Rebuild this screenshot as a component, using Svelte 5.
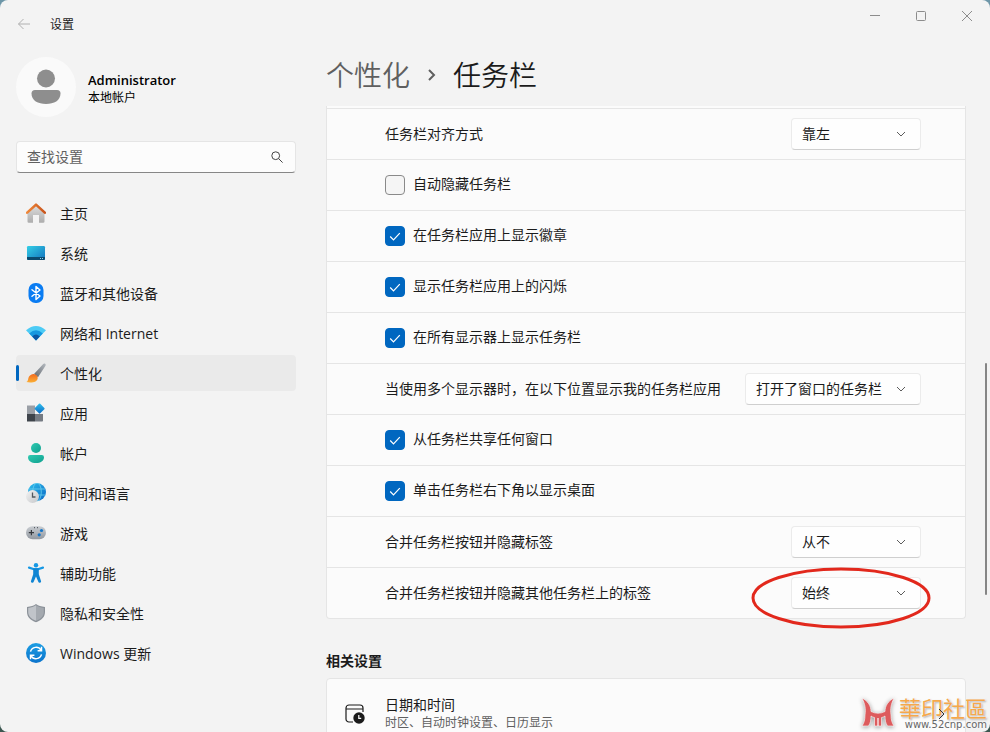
<script>
  const navItems = [
    { id: "home", label: "主页" },
    { id: "system", label: "系统" },
    { id: "bluetooth", label: "蓝牙和其他设备" },
    { id: "network", label: "网络和 Internet" },
    { id: "personalize", label: "个性化" },
    { id: "apps", label: "应用" },
    { id: "accounts", label: "帐户" },
    { id: "time", label: "时间和语言" },
    { id: "gaming", label: "游戏" },
    { id: "access", label: "辅助功能" },
    { id: "privacy", label: "隐私和安全性" },
    { id: "update", label: "Windows 更新" },
  ];

  let active = $state("personalize");
  let query = $state("");

  let rows = $state([
    { type: "select", label: "任务栏对齐方式", value: "靠左", options: ["靠左", "居中"] },
    { type: "check", label: "自动隐藏任务栏", checked: false },
    { type: "check", label: "在任务栏应用上显示徽章", checked: true },
    { type: "check", label: "显示任务栏应用上的闪烁", checked: true },
    { type: "check", label: "在所有显示器上显示任务栏", checked: true },
    {
      type: "select",
      label: "当使用多个显示器时，在以下位置显示我的任务栏应用",
      value: "打开了窗口的任务栏",
      options: ["打开了窗口的任务栏", "所有任务栏"],
      wide: true,
    },
    { type: "check", label: "从任务栏共享任何窗口", checked: true },
    { type: "check", label: "单击任务栏右下角以显示桌面", checked: true },
    { type: "select", label: "合并任务栏按钮并隐藏标签", value: "从不", options: ["从不", "始终"] },
    {
      type: "select",
      label: "合并任务栏按钮并隐藏其他任务栏上的标签",
      value: "始终",
      options: ["始终", "从不"],
      circled: true,
    },
  ]);
</script>

{#snippet navIcon(id)}
  <svg class="nav-icon" viewBox="0 0 20 20" aria-hidden="true">
    {#if id === "home"}
      <path d="M1.500 9.500 10 2l8.500 7.500V18.500a1.300 1.300 0 0 1-1.300 1.300H13V12H7v7.800H2.800a1.300 1.300 0 0 1-1.300-1.300z" fill="url(#g-grey)" />
      <path d="M1.200 9.600 10 1.600l8.800 8" fill="none" stroke="url(#g-roof)" stroke-width="2.600" stroke-linecap="round" stroke-linejoin="round" />
    {:else if id === "system"}
      <rect x="1" y="3" width="18" height="14" rx="1.200" fill="url(#g-screen)" />
      <path d="M1 14h18v1.800a1.200 1.200 0 0 1-1.200 1.200H2.200A1.200 1.200 0 0 1 1 15.800z" fill="#0b4a6f" />
      <path d="M14 15.500h1M16 15.500h1" stroke="#8fd3ee" />
    {:else if id === "bluetooth"}
      <rect x="2.500" y="0" width="15" height="20" rx="7" fill="#0a7cf2" />
      <path d="M6 6.800l8 6.200-4 3.500v-13l4 3.500-8 6.200" fill="none" stroke="#fff" stroke-width="1.400" stroke-linejoin="round" stroke-linecap="round" />
    {:else if id === "network"}
      <path d="M0 7.300Q10-1.400 20 7.300L10 17.600z" fill="#4ccbf5" />
      <path d="M3.200 10.500Q10 4.200 16.800 10.500L10 17.600z" fill="#1597e0" />
      <path d="M6.200 13.600Q10 9.600 13.800 13.600L10 17.600z" fill="#0b56a4" />
    {:else if id === "personalize"}
      <path d="M18.800.5c1 .4 1.200 1.400.7 2.300L12 14.200 8 11 17 1.200c.6-.6 1.100-.9 1.800-.7z" fill="url(#g-brush)" />
      <path d="M7.700 11c2.200.2 4 2 4 3.900 0 3.900-5.700 5.500-11.400 4.200 1.600-.9 1.700-2 2-3.600.4-2.400 2.800-4.800 5.400-4.500z" fill="url(#g-fire)" />
    {:else if id === "apps"}
      <path d="M1 2.500h8V11H1z" fill="#9a9fa6" />
      <path d="M1 11h8v7.500H1z" fill="#3e444b" />
      <path d="M9 11h8v6.700a.8.800 0 0 1-.8.800H9z" fill="#757b83" />
      <rect x="9.800" y="1.800" width="7.600" height="7.600" rx=".9" transform="rotate(45 13.600 5.600)" fill="url(#g-blue)" />
    {:else if id === "accounts"}
      <circle cx="10" cy="5" r="5" fill="url(#g-teal)" />
      <path d="M4.200 12h11.600A2.200 2.200 0 0 1 18 14.200C18 18 14.500 20 10 20s-8-2-8-5.800A2.200 2.200 0 0 1 4.200 12z" fill="url(#g-teal)" />
    {:else if id === "time"}
      <circle cx="11" cy="9" r="9" fill="url(#g-blue)" />
      <path d="M3 6h16M2.500 12h17" stroke="#6bd0ee" stroke-width=".8" />
      <ellipse cx="11" cy="9" rx="4.300" ry="9" fill="none" stroke="#6bd0ee" stroke-width=".8" />
      <circle cx="6.500" cy="13.500" r="6.500" fill="url(#g-clock)" />
      <path d="M6.500 9.500v4.500h3" fill="none" stroke="#53585e" stroke-width="1.300" />
    {:else if id === "gaming"}
      <rect x="0" y="3.200" width="20" height="13" rx="6.500" fill="url(#g-pad)" />
      <path d="M2.800 9.700h5.200M5.400 7.100v5.200" stroke="#35393e" stroke-width="1.200" />
      <path d="M8 4.700h1M11 4.700h1" stroke="#42474d" />
      <circle cx="15.500" cy="7.500" r="1.600" fill="#1676c8" />
      <circle cx="13.200" cy="11.800" r="1.600" fill="#1676c8" />
    {:else if id === "access"}
      <circle cx="10" cy="2.200" r="2.200" fill="#1698e4" />
      <path d="M3 4.600 8 6.200h4l5-1.600" fill="none" stroke="#1698e4" stroke-width="2.200" stroke-linecap="round" />
      <path d="M7.200 5.600h5.600v5.600l2.200 6.800a1.400 1.400 0 0 1-2.700.8L10 13.500l-2.300 5.300A1.400 1.400 0 0 1 5 18l2.200-6.800z" fill="#1085d3" />
    {:else if id === "privacy"}
      <path d="M10 1c2.500 1.700 5 2.600 9 2.900V9c0 5-3.600 8.300-9 10.200C4.600 17.300 1 14 1 9V3.900C5 3.600 7.500 2.700 10 1z" fill="#8c9299" />
      <path d="M10 2.300v15.500C5.200 16 2.200 13 2.200 9V5c3.500-.4 5.500-1.200 7.800-2.700z" fill="#c0c4c9" />
      <path d="M10 2.300c2.300 1.500 4.300 2.300 7.800 2.700v4c0 4-3 7-7.800 8.800z" fill="#a4a9af" />
    {:else}
      <circle cx="10" cy="10" r="10" fill="url(#g-update)" />
      <path d="M4.500 8.600A5.800 5.800 0 0 1 15 7M15.500 11.400A5.800 5.800 0 0 1 5 13" fill="none" stroke="#fff" stroke-width="1.500" />
      <path d="M15.500 3.800v3.900h-3.900M4.500 16.200v-3.900h3.900" fill="none" stroke="#fff" stroke-width="1.500" />
    {/if}
  </svg>
{/snippet}

<svg class="defs" aria-hidden="true">
  <defs>
    <linearGradient id="g-grey" x2="0" y2="1"><stop stop-color="#dedede" /><stop offset="1" stop-color="#acacac" /></linearGradient>
    <linearGradient id="g-roof"><stop stop-color="#f0883a" /><stop offset="1" stop-color="#c9551c" /></linearGradient>
    <linearGradient id="g-screen" x2="1" y2="1"><stop stop-color="#34cfe6" /><stop offset="1" stop-color="#1272be" /></linearGradient>
    <linearGradient id="g-brush" x1="1" x2="0" y2="1"><stop stop-color="#b5bac0" /><stop offset="1" stop-color="#62686f" /></linearGradient>
    <linearGradient id="g-fire" x2="0" y2="1"><stop stop-color="#f26a1e" /><stop offset="1" stop-color="#fbb035" /></linearGradient>
    <linearGradient id="g-blue" x2="1" y2="1"><stop stop-color="#2ec0ee" /><stop offset="1" stop-color="#0b68c4" /></linearGradient>
    <linearGradient id="g-teal" x2="1" y2="1"><stop stop-color="#2fcab1" /><stop offset="1" stop-color="#0fa08f" /></linearGradient>
    <linearGradient id="g-clock" x2="1" y2="1"><stop stop-color="#f3f3f3" /><stop offset="1" stop-color="#c5c7ca" /></linearGradient>
    <linearGradient id="g-pad" x2="0" y2="1"><stop stop-color="#c9cdd2" /><stop offset="1" stop-color="#9298a0" /></linearGradient>
    <linearGradient id="g-update" x2="0" y2="1"><stop stop-color="#1b9de3" /><stop offset="1" stop-color="#0c74cc" /></linearGradient>
  </defs>
</svg>

<div class="window">
  <header class="titlebar">
    <button class="back" aria-label="返回">
      <svg width="14" height="14" viewBox="0 0 14 14"><path d="M13 7H1.500M6.500 2 1.500 7l5 5" /></svg>
    </button>
    <span class="title">设置</span>
    <div class="caption-buttons">
      <button aria-label="最小化"><svg width="12" height="12" viewBox="0 0 12 12"><path d="M1 5.500h10" /></svg></button>
      <button aria-label="最大化"><svg width="12" height="12" viewBox="0 0 12 12"><rect x="1.500" y="1.500" width="9" height="9" rx="1" /></svg></button>
      <button aria-label="关闭"><svg width="12" height="12" viewBox="0 0 12 12"><path d="M1 1l10 10M11 1 1 11" /></svg></button>
    </div>
  </header>

  <div class="body">
    <aside class="sidebar">
      <div class="account">
        <svg class="avatar" viewBox="0 0 60 60" aria-hidden="true">
          <circle cx="30" cy="30" r="30" fill="#fafafa" />
          <circle cx="30" cy="21.500" r="9" fill="#8e8e8e" />
          <path d="M19 33h22a3.500 3.500 0 0 1 3.500 3.500C44.500 43.500 38 47 30 47s-14.500-3.500-14.500-10.500A3.500 3.500 0 0 1 19 33z" fill="#8e8e8e" />
        </svg>
        <div class="account-text">
          <strong>Administrator</strong>
          <span>本地帐户</span>
        </div>
      </div>

      <div class="search">
        <input type="text" placeholder="查找设置" aria-label="查找设置" bind:value={query} />
        <svg width="12" height="12" viewBox="0 0 12 12" aria-hidden="true"><circle cx="4.700" cy="4.700" r="3.900" /><path d="M7.600 7.600l4 4" /></svg>
      </div>

      <nav>
        {#each navItems as item}
          <button class="nav-item" class:active={active === item.id} onclick={() => (active = item.id)}>
            {@render navIcon(item.id)}
            <span>{item.label}</span>
          </button>
        {/each}
      </nav>
    </aside>

    <main>
      <h1>
        <a href="#personalize">个性化</a>
        <svg width="9" height="12" viewBox="0 0 9 12" aria-hidden="true"><path d="M2 1l5 5-5 5" /></svg>
        <span>任务栏</span>
      </h1>

      <div class="scroll-area">
        <div class="card options">
          {#each rows as row, i}
            <div class="row">
              {#if row.type === "check"}
                <label class="check">
                  <input type="checkbox" bind:checked={row.checked} />
                  {#if row.checked}
                    <svg width="20" height="20" viewBox="0 0 20 20" aria-hidden="true"><path d="M5.200 10.500l3.300 3.300 6.300-6.600" /></svg>
                  {/if}
                  <span>{row.label}</span>
                </label>
              {:else}
                <label for="option-{i}">{row.label}</label>
                <div class="select" class:wide={row.wide}>
                  <select id="option-{i}" bind:value={row.value}>
                    {#each row.options as option}
                      <option>{option}</option>
                    {/each}
                  </select>
                  <svg class="chevron" width="10" height="6" viewBox="0 0 10 6" aria-hidden="true"><path d="M1 1l4 4 4-4" /></svg>
                  {#if row.circled}
                    <svg class="circle" width="180" height="62" viewBox="0 0 180 62" aria-hidden="true"><ellipse cx="90" cy="31" rx="88" ry="29" /></svg>
                  {/if}
                </div>
              {/if}
            </div>
          {/each}
        </div>

        <h2>相关设置</h2>
        <a class="card related" href="#datetime">
          <svg class="date-icon" width="20" height="20" viewBox="0 0 20 20" aria-hidden="true">
            <path d="M8 18H4a3 3 0 0 1-3-3V4a3 3 0 0 1 3-3h11a3 3 0 0 1 3 3v4M1 5h17" fill="none" stroke="#1b1b1b" stroke-width="1.200" />
            <circle cx="14" cy="14" r="5.700" fill="#1b1b1b" />
            <path d="M13.800 11v3.300h2.400" fill="none" stroke="#fff" stroke-width="1.200" />
          </svg>
          <div class="related-text">
            <span>日期和时间</span>
            <small>时区、自动时钟设置、日历显示</small>
          </div>
          <svg class="go" width="8" height="12" viewBox="0 0 8 12" aria-hidden="true"><path d="M2 1l5 5-5 5" /></svg>
        </a>
      </div>
      <div class="scroll-thumb"></div>
    </main>
  </div>

  <div class="watermark">
    <svg width="36" height="34" viewBox="0 0 36 34" aria-hidden="true">
      <path d="M2 2C8 5 11 10 11 15.500Q18 19 25 15.500C25 10 28 5 34 2C31 8 30 13 31 19C31 24 32 27 34 30H27.500C25.500 27 25 24 25 20Q23 21.500 21.500 21.500V30H14.500V21.500Q13 21.500 11 20C11 24 10.500 27 8.500 30H2C4 27 5 24 5 19C6 13 5 8 2 2z" />
      <path class="slit" d="M18 22v8" />
    </svg>
    <div class="watermark-text">
      <b>華印社區</b>
      <span>www.52cnp.com</span>
    </div>
  </div>
</div>

<style>
  :global(body) {
    margin: 0;
    background: linear-gradient(#6d96a8, #3c5750);
  }

  .defs {
    position: absolute;
    width: 0;
    height: 0;
  }

  .window {
    position: relative;
    display: flex;
    flex-direction: column;
    height: 100vh;
    overflow: hidden;
    border-radius: 8px;
    background: #f3f3f3;
    color: #1b1b1b;
    font-family: "Open Sans", "Noto Sans CJK SC", sans-serif;
    font-size: 14px;
    line-height: 20px;
  }

  button,
  input,
  select {
    font: inherit;
    color: inherit;
  }

  button {
    border: 0;
    padding: 0;
    background: none;
  }

  svg {
    flex: none;
  }

  .titlebar {
    display: flex;
    align-items: center;
    height: 48px;
    flex: none;
  }

  .back {
    display: grid;
    place-items: center;
    width: 32px;
    height: 32px;
    margin: 0 10px 0 8px;
  }

  .back path {
    fill: none;
    stroke: #b0b0b0;
  }

  .title {
    padding-top: 2px;
    font-size: 12px;
  }

  .caption-buttons {
    display: flex;
    align-self: flex-start;
    margin-left: auto;
  }

  .caption-buttons button {
    display: grid;
    place-items: center;
    width: 46px;
    height: 32px;
  }

  .caption-buttons svg {
    fill: none;
    stroke: #8c8c8c;
  }

  .body {
    display: flex;
    flex: 1;
    min-height: 0;
  }

  .sidebar {
    flex: none;
    width: 280px;
    padding: 9px 30px 0 16px;
  }

  .account {
    display: flex;
    align-items: center;
    gap: 12px;
    margin-bottom: 24px;
  }

  .avatar {
    width: 60px;
    height: 60px;
  }

  .account-text {
    display: flex;
    flex-direction: column;
    padding-top: 4px;
    line-height: 17px;
    color: #000;
  }

  .account-text strong {
    font-size: 13px;
    font-weight: 600;
  }

  .account-text span {
    font-size: 12px;
  }

  .search {
    display: flex;
    align-items: center;
    box-sizing: border-box;
    height: 32px;
    margin-bottom: 22px;
    padding: 0 12px 0 10px;
    border: 1px solid #e5e5e5;
    border-bottom-color: #868686;
    border-radius: 4px;
    background: #fcfcfc;
  }

  .search input {
    flex: 1;
    min-width: 0;
    padding: 0;
    border: 0;
    outline: 0;
    background: none;
  }

  .search input::placeholder {
    color: #606060;
  }

  .search svg {
    fill: none;
    stroke: #444;
  }

  nav {
    display: flex;
    flex-direction: column;
    gap: 4px;
  }

  .nav-item {
    position: relative;
    display: flex;
    align-items: center;
    gap: 14px;
    height: 36px;
    padding: 0 10px;
    border-radius: 4px;
    text-align: left;
  }

  .nav-item span {
    padding-top: 2px;
  }

  .nav-item.active,
  .nav-item:hover {
    background: #eaeaea;
  }

  .nav-item.active::before {
    content: "";
    position: absolute;
    left: 0;
    top: 10px;
    width: 3px;
    height: 16px;
    border-radius: 2px;
    background: #0067c0;
  }

  .nav-icon {
    width: 20px;
    height: 20px;
  }

  main {
    position: relative;
    display: flex;
    flex: 1;
    flex-direction: column;
    min-width: 0;
  }

  h1 {
    display: flex;
    align-items: center;
    gap: 17px;
    box-sizing: border-box;
    height: 58px;
    flex: none;
    margin: 0;
    padding-bottom: 4px;
    font-size: 28px;
    font-weight: 350;
    line-height: 36px;
  }

  h1 a {
    color: #5f5f5f;
    text-decoration: none;
  }

  h1 svg {
    fill: none;
    stroke: #5f5f5f;
    stroke-width: 2;
  }

  .scroll-area {
    flex: 1;
    min-height: 0;
    overflow: hidden;
    padding-right: 24px;
  }

  .card {
    border: 1px solid #e5e5e5;
    border-radius: 4px;
    background: #fbfbfb;
  }

  .options {
    padding-top: 2px;
    border-top: 0;
    border-radius: 0 0 4px 4px;
  }

  .row {
    display: flex;
    align-items: center;
    justify-content: space-between;
    height: 50px;
    padding: 0 44px 0 58px;
    border-top: 1px solid #e5e5e5;
  }

  .check {
    position: relative;
    display: flex;
    align-items: center;
    gap: 8px;
  }

  .check span {
    padding-bottom: 2px;
  }

  .check input {
    appearance: none;
    width: 20px;
    height: 20px;
    margin: 0;
    border: 1px solid #8a8a8a;
    border-radius: 4px;
    background: #f5f5f5;
  }

  .check input:checked {
    border-color: #0067c0;
    background: #0067c0;
  }

  .check svg {
    position: absolute;
    left: 0;
    fill: none;
    stroke: #fff;
    stroke-width: 1.2;
    pointer-events: none;
  }

  .select {
    position: relative;
    width: 130px;
  }

  .select.wide {
    width: 176px;
  }

  select {
    display: block;
    appearance: none;
    width: 100%;
    height: 32px;
    padding: 0 32px 0 10px;
    border: 1px solid #ebebeb;
    border-bottom-color: #cfcfcf;
    border-radius: 4px;
    background: #fefefe;
  }

  .chevron {
    position: absolute;
    right: 15px;
    top: 13px;
    fill: none;
    stroke: #5c5c5c;
    pointer-events: none;
  }

  .circle {
    position: absolute;
    right: -10px;
    top: -10px;
    fill: none;
    stroke: #e2281c;
    stroke-width: 3;
    pointer-events: none;
  }

  h2 {
    margin: 32px 0 7px;
    font-size: 14px;
    font-weight: 600;
    line-height: 20px;
  }

  .related {
    display: flex;
    align-items: center;
    height: 70px;
    padding: 0 20px 0 18px;
    color: inherit;
    text-decoration: none;
  }

  .related-text {
    display: flex;
    flex: 1;
    flex-direction: column;
    margin-left: 20px;
    line-height: 18px;
  }

  .related-text small {
    font-size: 12px;
    color: #5f5f5f;
  }

  .go {
    position: relative;
    z-index: 1;
    fill: none;
    stroke: #333;
  }

  .scroll-thumb {
    position: absolute;
    right: 3px;
    top: 46%;
    width: 2px;
    height: 34%;
    border-radius: 1px;
    background: #858585;
  }

  .watermark {
    position: absolute;
    right: 3px;
    bottom: 1px;
    display: flex;
    align-items: center;
    gap: 3px;
    pointer-events: none;
  }

  .watermark svg {
    fill: #dd5b5d;
    stroke: #fff;
    stroke-width: 0.6;
    filter: drop-shadow(0 1px 2px #999);
  }

  .watermark .slit {
    stroke-width: 1.2;
  }

  .watermark-text {
    display: flex;
    flex-direction: column;
    align-items: flex-end;
  }

  .watermark b {
    font-family: "Noto Sans CJK TC", sans-serif;
    font-size: 22px;
    font-weight: 400;
    line-height: 24px;
    color: #f5a84b;
    text-shadow: 0 0 2px #fff, 1px 1px 2px #999;
  }

  .watermark span {
    font-family: "DejaVu Sans", sans-serif;
    font-size: 10px;
    line-height: 12px;
    color: #666;
    text-shadow: 0 0 2px #fff;
  }
</style>
